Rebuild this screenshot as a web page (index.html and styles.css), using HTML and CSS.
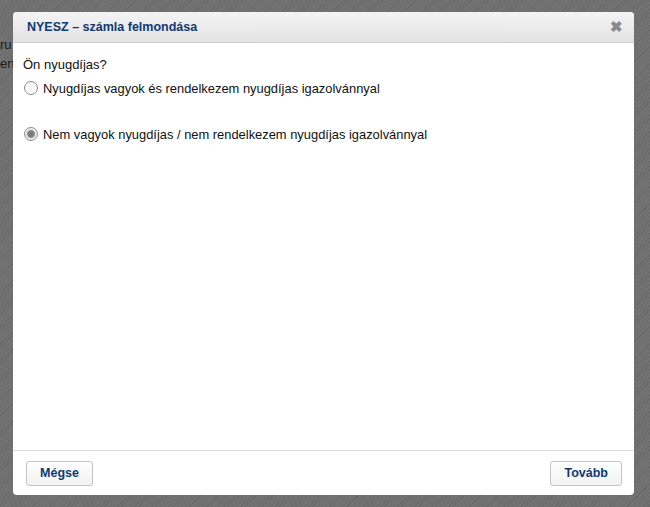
FILE: index.html
```html
<!DOCTYPE html>
<html lang="hu">
<head>
  <meta charset="UTF-8" />
  <title>NYESZ – számla felmondása</title>
  <link rel="stylesheet" href="styles.css">
</head>
<body>
  <div class="page">
    <p class="page-line">ru</p>
    <p class="page-line">ent</p>
  </div>

  <div class="overlay">
    <div class="dialog">
      <div class="dialog-header">
        <span class="dialog-title">NYESZ – számla felmondása</span>
        <span class="dialog-close">&#10006;</span>
      </div>
      <div class="dialog-body">
        <p class="question">Ön nyugdíjas?</p>
        <label class="option">
          <input type="radio" name="nyugdijas" value="igen">
          Nyugdíjas vagyok és rendelkezem nyugdíjas igazolvánnyal
        </label>
        <label class="option option-second">
          <input type="radio" name="nyugdijas" value="nem" checked>
          Nem vagyok nyugdíjas / nem rendelkezem nyugdíjas igazolvánnyal
        </label>
      </div>
      <div class="dialog-footer">
        <button class="btn">Mégse</button>
        <button class="btn">Tovább</button>
      </div>
    </div>
  </div>
</body>
</html>
```

FILE: styles.css
```css
html, body {
  margin: 0;
  height: 100%;
}
body {
  font-family: "Liberation Sans", Arial, sans-serif;
  font-size: 13px;
  color: #111;
  background-color: #6f6f6f;
  background-image: repeating-linear-gradient(135deg, #6a6a6a 0, #6a6a6a 1px, #737373 1px, #737373 3px);
  overflow: hidden;
}
.page {
  padding: 35px 0 0 0;
}
.page-line {
  margin: 0;
  height: 19px;
  line-height: 19px;
  font-size: 13px;
  color: #1a1a1a;
  white-space: nowrap;
}
.overlay {
  position: absolute;
  inset: 0;
}
.dialog {
  position: absolute;
  left: 13px;
  top: 12px;
  width: 621px;
  height: 483px;
  background: #fff;
  border-radius: 4px;
  display: flex;
  flex-direction: column;
  overflow: hidden;
}
.dialog-header {
  height: 30px;
  display: flex;
  align-items: center;
  justify-content: space-between;
  padding: 0 11px 0 14px;
  background: linear-gradient(#f4f4f4, #e3e3e3);
  border-bottom: 1px solid #cfcfcf;
}
.dialog-title {
  font-weight: bold;
  font-size: 12.5px;
  color: #0e3a73;
}
.dialog-close {
  font-size: 15px;
  color: #8a8a8a;
  font-weight: bold;
}
.dialog-body {
  flex: 1;
  padding: 14px 10px 0 10px;
}
.question {
  margin: 0 0 7px 0;
  font-size: 13px;
}
.option {
  display: flex;
  align-items: center;
  gap: 5px;
  font-size: 12.9px;
  height: 18px;
}
.option input {
  appearance: none;
  margin: 0 0 0 1px;
  width: 14px;
  height: 14px;
  border: 1px solid #8c8c8c;
  border-radius: 50%;
  background: linear-gradient(#f4f4f4, #ffffff);
  box-sizing: border-box;
}
.option input:checked {
  background: radial-gradient(circle, #6f6f6f 0, #8a8a8a 3.5px, #e8e8e8 4.5px, #f6f6f6 100%);
}
.option-second {
  margin-top: 28px;
}
.dialog-footer {
  height: 44px;
  border-top: 1px solid #dcdcdc;
  display: flex;
  align-items: center;
  justify-content: space-between;
  padding: 0 12px 0 13px;
}
.btn {
  font-family: "Liberation Sans", Arial, sans-serif;
  font-weight: bold;
  font-size: 12.5px;
  color: #0e3a73;
  background: linear-gradient(#ffffff, #f2f2f2);
  border: 1px solid #c4c4c4;
  border-radius: 3px;
  height: 25px;
  padding: 0 13px;
  min-width: 67px;
}
.btn:last-child {
  min-width: 71px;
}
```
